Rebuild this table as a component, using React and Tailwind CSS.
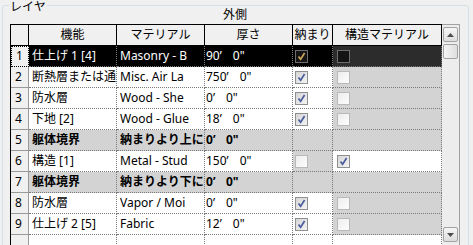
import React from "react"

const rows = [
    { n: 1, name: "仕上げ 1 [4]", mat: "Masonry - B", ft: "90", kind: "sel" },
    { n: 2, name: "断熱層または通", mat: "Misc. Air La", ft: "750", kind: "layer" },
    { n: 3, name: "防水層", mat: "Wood - She", ft: "0", kind: "layer" },
    { n: 4, name: "下地 [2]", mat: "Wood - Glue", ft: "18", kind: "layer" },
    { n: 5, name: "躯体境界", mat: "納まりより上に", ft: "0", kind: "boundary" },
    { n: 6, name: "構造 [1]", mat: "Metal - Stud", ft: "150", kind: "core" },
    { n: 7, name: "躯体境界", mat: "納まりより下に", ft: "0", kind: "boundary" },
    { n: 8, name: "防水層", mat: "Vapor / Moi", ft: "0", kind: "layer" },
    { n: 9, name: "仕上げ 2 [5]", mat: "Fabric", ft: "12", kind: "layer" },
]

// small windows style checkbox
const Check = ({ on, dark }) => {
    if (dark) {
        return (
            <div className="w-[13px] h-[13px] border border-[#6e6e6e] bg-[#141414] flex items-center justify-center">
                {on && (
                    <svg width="11" height="11" viewBox="0 0 11 11">
                        <path d="M2.5 5.5 L4.6 8.2 L8.6 2" fill="none" stroke="#c9a45a" strokeWidth="1.7" />
                    </svg>
                )}
            </div>
        )
    }
    if (on) {
        return (
            <div className="w-[13px] h-[13px] border border-[#8e8f8f] bg-gradient-to-br from-[#d6d6d6] to-[#f4f4f4] flex items-center justify-center">
                <svg width="11" height="11" viewBox="0 0 11 11">
                    <path d="M2.5 5.5 L4.6 8.2 L8.6 2" fill="none" stroke="#4a5d9c" strokeWidth="1.7" />
                </svg>
            </div>
        )
    }
    return <div className="w-[13px] h-[13px] border border-[#b9b9b9] bg-gradient-to-br from-[#ededed] to-[#fdfdfd]" />
}

const Thick = ({ ft }) => (
    <span className="whitespace-pre">
        {ft}<span className="inline-block w-[10px]">’</span> 0"
    </span>
)

const cell = "border-r border-b border-dotted border-[#7a7a7a] h-full overflow-hidden whitespace-nowrap leading-[20px]"

const Row = ({ r }) => {
    const sel = r.kind === "sel"
    const bnd = r.kind === "boundary"
    const txt = sel ? "bg-black text-white" : bnd ? "bg-[#d3d3d3] font-bold" : "bg-white"
    const wrapBg = sel ? "bg-black" : bnd || r.kind === "core" ? "bg-[#d3d3d3]" : "bg-white"
    const structBg = sel ? "bg-[#2c2c2c]" : r.kind === "core" ? "bg-white" : "bg-[#d3d3d3]"
    return (
        <div className="flex h-[21px] shrink-0">
            <div className={`w-[18px] bg-[#f0f0f0] pl-[4px] ${sel ? "border border-dotted border-black leading-[18px]" : "border-r border-b border-[#9a9a9a] border-b-dotted leading-[20px]"}`}>
                {r.n}
            </div>
            <div className={`w-[88px] px-[3px] ${cell} ${txt}`}>{r.name}</div>
            <div className={`w-[88px] px-[3px] ${cell} ${txt}`}>{r.mat}</div>
            <div className={`w-[88px] pl-[1px] ${cell} ${txt}`}><Thick ft={r.ft} /></div>
            <div className={`w-[40px] pl-[2px] flex items-center ${cell} ${wrapBg}`}>
                {!bnd && <Check on={r.kind !== "core"} dark={sel} />}
            </div>
            <div className={`w-[109px] pl-[4px] flex items-center ${cell} ${structBg}`}>
                {!bnd && <Check on={r.kind === "core"} dark={sel} />}
            </div>
        </div>
    )
}

const ScrollBtn = ({ up }) => (
    <div className="w-[15px] h-[15px] rounded-[2px] border border-[#a3a3a3] bg-gradient-to-b from-[#f6f6f6] to-[#dcdcdc] flex items-center justify-center">
        <svg width="7" height="4" viewBox="0 0 7 4">
            <path d={up ? "M0 4 L3.5 0 L7 4 Z" : "M0 0 L3.5 4 L7 0 Z"} fill="#4d4d4d" />
        </svg>
    </div>
)

export default function App() {
    return (
        <div className="w-[473px] h-[245px] overflow-hidden bg-[#f0f0f0] pl-[2px] pr-[4px] pt-[5px] text-[12px] text-black font-['Noto_Sans','Noto_Sans_CJK_JP',sans-serif]">
            <div className="relative h-[300px] rounded-[3px] border border-[#d5dfe5] pl-[7px]">
                <div className="absolute left-[6px] top-[-6px] px-[1px] leading-[13px] bg-[#f0f0f0] whitespace-nowrap">レイヤ</div>
                <div className="w-[450px] h-[18px] leading-[18px] text-center">外側</div>

                <div className="flex w-[450px] h-[221px]">
                    {/* grid */}
                    <div className="w-[432px] border-l border-t border-black bg-white flex flex-col overflow-hidden">
                        <div className="flex h-[21px] shrink-0 border-b border-black bg-[#f0f0f0] leading-[20px] text-center">
                            <div className="w-[18px] border-r border-black" />
                            <div className="w-[88px] border-r border-black">機能</div>
                            <div className="w-[88px] border-r border-black">マテリアル</div>
                            <div className="w-[88px] border-r border-black">厚さ</div>
                            <div className="w-[40px] border-r border-black whitespace-nowrap">納まり</div>
                            <div className="w-[109px] border-r border-black">構造マテリアル</div>
                        </div>
                        {rows.map((r) => (
                            <Row r={r} key={r.n} />
                        ))}
                        <div className="flex h-[21px] shrink-0">
                            <div className="w-[18px] bg-[#f0f0f0] border-r border-[#9a9a9a]" />
                            <div className={`w-[88px] ${cell}`} />
                            <div className={`w-[88px] ${cell}`} />
                            <div className={`w-[88px] ${cell}`} />
                            <div className={`w-[40px] ${cell}`} />
                            <div className={`w-[109px] ${cell}`} />
                        </div>
                    </div>
                    {/* scrollbar */}
                    <div className="w-[18px] border-t border-r border-[#a0a0a0] bg-[#ededed] pl-px pt-[2px] pb-[3px] flex flex-col">
                        <ScrollBtn up />
                        <div className="mt-[2px] w-[15px] h-[15px] rounded-[2px] border border-[#a3a3a3] bg-gradient-to-r from-[#f4f4f4] to-[#dedede]" />
                        <div className="flex-1" />
                        <ScrollBtn />
                    </div>
                </div>
            </div>
        </div>
    )
}
